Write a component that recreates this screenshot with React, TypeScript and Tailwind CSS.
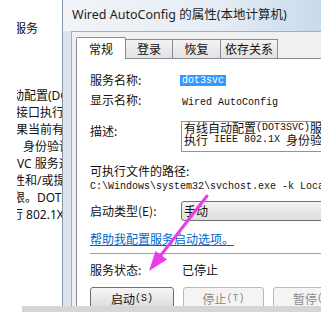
import React from "react";

const C = ({ children }: { children: React.ReactNode }) => (
  <span className="font-['Noto_Sans_CJK_SC',sans-serif] text-[12px] leading-[12px]">{children}</span>
);
const M = ({ children }: { children: React.ReactNode }) => (
  <span className="font-['Liberation_Mono',monospace] text-[10px] whitespace-pre">{children}</span>
);

function LeftLine({ off, children }: { off: string; children: React.ReactNode }) {
  return (
    <div className="h-[17px] leading-[17px] whitespace-nowrap">
      <span className={off}>{children}</span>
    </div>
  );
}

export default function App() {
  return (
    <div className="relative w-[321px] h-[312px] overflow-hidden bg-white text-[#111] font-['Noto_Sans','Noto_Sans_CJK_SC',sans-serif] text-[12px]">
      <div className="flex h-[306px] overflow-hidden">
        {/* left column */}
        <div className="w-[62px] shrink-0 pl-[17px]">
          <div className="w-[45px] overflow-hidden">
            <div className="mt-[21px] h-[16px] leading-[16px] whitespace-nowrap">
              <span className="ml-[-3px]">服务</span>
            </div>
            <div className="mt-[50px]">
              <LeftLine off="ml-[-5px]">动配置(DOT3</LeftLine>
              <LeftLine off="ml-[-1px]">接口执行上</LeftLine>
              <LeftLine off="ml-[-1px]">果当前有线</LeftLine>
              <LeftLine off="ml-[6px]">身份验证。</LeftLine>
              <LeftLine off="ml-0">VC 服务运行</LeftLine>
              <LeftLine off="ml-[-4px]">性和/或提供</LeftLine>
              <LeftLine off="ml-[-4px]">限。DOT3SVC</LeftLine>
              <LeftLine off="ml-[-6px]">行 802.1X</LeftLine>
            </div>
          </div>
        </div>

        {/* window */}
        <div className="flex-1 flex flex-col border-l border-[#8796a6] bg-[linear-gradient(90deg,#f1f4f8_0%,#e6edf5_60%,#c9d9ec_100%)] overflow-hidden">
          <div className="h-[31px] shrink-0 flex items-center pl-[9px] text-[12.5px] text-[#1e1e1e] whitespace-nowrap">
            Wired AutoConfig 的属性(本地计算机)
          </div>
          <div className="flex-1 flex">
            <div className="w-[8px] shrink-0 bg-[#dbe5f0]" />
            <div className="flex-1 flex flex-col border-l border-t border-[#a3afbc] bg-[#f0f0f0] pl-[4px] pt-[5px] overflow-hidden">
              {/* tabs */}
              <div className="relative z-10 flex items-end h-[22px] mb-[-1px] shrink-0">
                <div className="w-[50px] h-[22px] shrink-0 bg-white border border-b-0 border-[#898c95] rounded-t-[2px] flex items-center justify-center font-['Noto_Sans_CJK_SC',sans-serif]">
                  常规
                </div>
                <div className="w-[47px] h-[19px] mb-px shrink-0 bg-[linear-gradient(#f3f3f3,#e2e2e2)] border border-b-0 border-l-0 border-[#898c95] flex items-center justify-center font-['Noto_Sans_CJK_SC',sans-serif]">
                  登录
                </div>
                <div className="w-[48px] h-[19px] mb-px shrink-0 bg-[linear-gradient(#f3f3f3,#e2e2e2)] border border-b-0 border-l-0 border-[#898c95] flex items-center justify-center font-['Noto_Sans_CJK_SC',sans-serif]">
                  恢复
                </div>
                <div className="w-[57px] h-[19px] mb-px shrink-0 bg-[linear-gradient(#f3f3f3,#e2e2e2)] border border-b-0 border-l-0 border-[#898c95] flex items-center justify-center font-['Noto_Sans_CJK_SC',sans-serif]">
                  依存关系
                </div>
              </div>
              {/* panel */}
              <div className="flex-1 bg-white border-t border-l border-[#898c95] pl-[13px] pt-[13px] flex flex-col overflow-hidden font-['Noto_Sans_CJK_SC',sans-serif]">
                <div className="flex items-center h-[16px]">
                  <div className="w-[90px] shrink-0">服务名称:</div>
                  <div className="bg-[#3399ff] text-white px-[2px] h-[11px] flex items-center">
                    <M>dot3svc</M>
                  </div>
                </div>
                <div className="flex items-center h-[16px] mt-[4px]">
                  <div className="w-[90px] shrink-0">显示名称:</div>
                  <div className="pl-[2px]">
                    <M>Wired AutoConfig</M>
                  </div>
                </div>
                <div className="flex items-start h-[31px] mt-[13px]">
                  <div className="w-[91px] shrink-0 leading-[16px] mt-[2px]">描述:</div>
                  <div className="w-[220px] shrink-0 h-[31px] border border-[#8f959c] bg-white pl-[2px] whitespace-nowrap overflow-hidden">
                    <div className="h-[12px] leading-[12px] flex items-center">
                      <C>有线自动配置</C><M>(DOT3SVC)</M><C>服务在以太网接口上执行</C>
                    </div>
                    <div className="h-[12px] leading-[12px] flex items-center">
                      <C>执行</C><M> IEEE 802.1X </M><C>身份验证。如果当前</C>
                    </div>
                  </div>
                </div>
                <div className="h-[14px] leading-[14px] mt-[12px] whitespace-nowrap">可执行文件的路径:</div>
                <div className="h-[12px] leading-[12px] whitespace-nowrap">
                  <M>C:\Windows\system32\svchost.exe -k LocalSystemNetworkRestricted</M>
                </div>
                <div className="flex items-center h-[20px] mt-[11px]">
                  <div className="w-[91px] shrink-0 whitespace-nowrap">启动类型(E):</div>
                  <div className="w-[220px] shrink-0 h-[20px] border border-[#707070] rounded-[3px] bg-[linear-gradient(#f4f4f4,#e8e8e8_50%,#dedede)] pl-[2px] flex items-center">
                    手动
                  </div>
                </div>
                <div className="h-[16px] leading-[16px] mt-[10px] whitespace-nowrap">
                  <span className="text-[#0066cc] underline">帮助我配置服务启动选项。</span>
                </div>
                <div className="mt-[6px] h-px bg-[#a0a0a0]" />
                <div className="h-px bg-white" />
                <div className="flex items-center h-[16px] mt-[7px]">
                  <div className="w-[92px] shrink-0">服务状态:</div>
                  <div>已停止</div>
                </div>
                <div className="flex mt-[9px] gap-[9px] shrink-0">
                  <div className="w-[84px] h-[23px] shrink-0 border border-[#707070] rounded-[3px] bg-[linear-gradient(#f6f6f6,#e9e9e9_50%,#dadada)] flex items-center justify-center">
                    启动<M>(S)</M>
                  </div>
                  <div className="w-[81px] h-[23px] shrink-0 border border-[#b7babd] rounded-[3px] bg-[#f4f4f4] text-[#8a8a8a] flex items-center justify-center">
                    停止<M>(T)</M>
                  </div>
                  <div className="w-[82px] h-[23px] shrink-0 border border-[#b7babd] rounded-[3px] bg-[#f4f4f4] text-[#8a8a8a] flex items-center justify-center">
                    暂停<M>(P)</M>
                  </div>
                </div>
              </div>
            </div>
          </div>
        </div>
      </div>
      {/* bottom band */}
      <div className="flex h-[6px]">
        <div className="w-[22px] bg-white" />
        <div className="flex-1 bg-[#d6d6d6]" />
      </div>

      {/* annotation arrow */}
      <svg className="absolute inset-0 pointer-events-none" width="321" height="312" viewBox="0 0 321 312">
        <line x1="207" y1="196" x2="161" y2="255" stroke="#e83de8" strokeWidth="3" strokeLinecap="round" />
        <polygon points="149,271 167,259.5 155.5,251" fill="#e83de8" />
      </svg>
    </div>
  );
}
